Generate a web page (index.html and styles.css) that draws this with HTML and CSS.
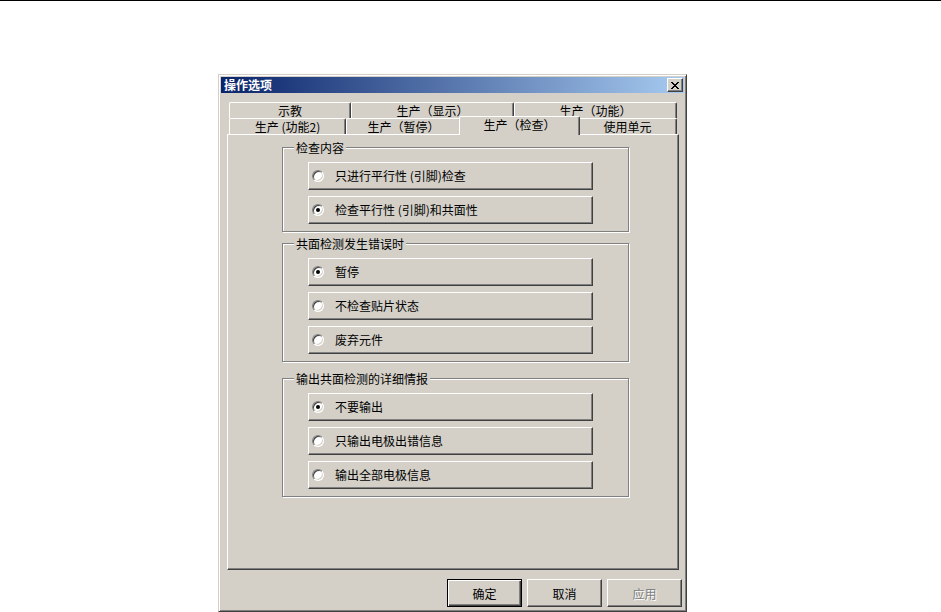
FILE: index.html
```html
<!DOCTYPE html>
<html lang="zh-CN">
<head>
<meta charset="utf-8">
<title>操作选项</title>
<link rel="stylesheet" href="styles.css">
</head>
<body>
<div class="topline"></div>
<div class="stage">
  <div class="dialog">
    <div class="titlebar">
      <span class="title">操作选项</span>
      <span class="close">
        <svg width="8" height="7" viewBox="0 0 8 7" shape-rendering="crispEdges"><path fill="#000" d="M0 0h2v1h-2z M6 0h2v1h-2z M1 1h2v1h-2z M5 1h2v1h-2z M2 2h4v1h-4z M3 3h2v1h-2z M2 4h4v1h-4z M1 5h2v1h-2z M5 5h2v1h-2z M0 6h2v1h-2z M6 6h2v1h-2z"/></svg>
      </span>
    </div>
    <div class="tabs">
      <div class="tabrow">
        <div class="tab t1">示教</div>
        <div class="tab t2">生产（显示）</div>
        <div class="tab t3">生产（功能）</div>
      </div>
      <div class="tabrow">
        <div class="tab t4">生产 (功能2)</div>
        <div class="tab t5">生产（暂停）</div>
        <div class="tab t6 sel">生产（检查）</div>
        <div class="tab t7">使用单元</div>
      </div>
    </div>
    <div class="panel">
      <div class="group">
        <div class="legend">检查内容</div>
        <div class="opts">
          <div class="opt"><span class="radio"></span><span class="lbl">只进行平行性 (引脚)检查</span></div>
          <div class="opt"><span class="radio"><span class="dot"></span></span><span class="lbl">检查平行性 (引脚)和共面性</span></div>
        </div>
      </div>
      <div class="group g2">
        <div class="legend">共面检测发生错误时</div>
        <div class="opts">
          <div class="opt"><span class="radio"><span class="dot"></span></span><span class="lbl">暂停</span></div>
          <div class="opt"><span class="radio"></span><span class="lbl">不检查贴片状态</span></div>
          <div class="opt"><span class="radio"></span><span class="lbl">废弃元件</span></div>
        </div>
      </div>
      <div class="group g3">
        <div class="legend">输出共面检测的详细情报</div>
        <div class="opts">
          <div class="opt"><span class="radio"><span class="dot"></span></span><span class="lbl">不要输出</span></div>
          <div class="opt"><span class="radio"></span><span class="lbl">只输出电极出错信息</span></div>
          <div class="opt"><span class="radio"></span><span class="lbl">输出全部电极信息</span></div>
        </div>
      </div>
    </div>
    <div class="buttons">
      <div class="btn default">确定</div>
      <div class="btn">取消</div>
      <div class="btn disabled">应用</div>
    </div>
  </div>
</div>
</body>
</html>
```
FILE: styles.css
```css
body {
  margin: 0;
  background: #fff;
  font-family: "Noto Sans CJK SC", "Noto Sans", sans-serif;
  font-size: 12px;
  color: #000;
}

.topline {
  height: 1px;
  background: #000;
}

.stage {
  padding: 73px 0 0 218px;
}

.dialog {
  width: 469px;
  height: 538px;
  box-sizing: border-box;
  background: #d4d0c8;
  border: 1px solid;
  border-color: #d4d0c8 #404040 #404040 #d4d0c8;
  box-shadow: inset 1px 1px 0 #fff, inset -1px -1px 0 #808080;
  padding: 2px;
  display: flex;
  flex-direction: column;
}

.titlebar {
  height: 16px;
  flex: none;
  background: linear-gradient(to right, #0a246a, #a6caf0);
  display: flex;
  align-items: center;
  justify-content: space-between;
  padding-left: 3px;
}

.title {
  color: #fff;
  font-weight: bold;
  font-size: 12px;
  line-height: 16px;
}

.close {
  width: 16px;
  height: 14px;
  box-sizing: border-box;
  background: #d4d0c8;
  border: 1px solid;
  border-color: #fff #404040 #404040 #fff;
  box-shadow: inset -1px -1px 0 #808080;
  margin-right: 1px;
  display: flex;
  align-items: center;
  justify-content: center;
}

.close svg {
  display: block;
}

.tabs {
  margin: 9px 0 0 6px;
  width: 452px;
  display: flex;
  flex-direction: column;
}

.tabrow {
  display: flex;
  height: 16px;
  padding-left: 2px;
  align-items: flex-end;
}

.tab {
  height: 16px;
  box-sizing: border-box;
  background: #d4d0c8;
  border-top: 1px solid #fff;
  border-left: 1px solid #fff;
  border-right: 1px solid #404040;
  box-shadow: inset -1px 0 0 #808080;
  border-radius: 2px 2px 0 0;
  text-align: center;
  line-height: 15px;
  white-space: nowrap;
  flex: none;
}

.t1 { width: 122px; }
.t2 { width: 163px; }
.t3 { width: 163px; }
.t4 { width: 117px; }
.t5 { width: 115px; }
.t6 { width: 117px; }
.t7 { width: 99px; }

.tab.sel {
  width: 121px;
  height: 19px;
  margin: 0 -2px -1px;
  position: relative;
  z-index: 2;
  line-height: 16px;
}

.panel {
  margin-left: 6px;
  width: 452px;
  height: 436px;
  flex: none;
  box-sizing: border-box;
  border: 1px solid;
  border-color: #fff #404040 #404040 #fff;
  box-shadow: inset -1px -1px 0 #808080;
  padding: 12px 0 0 54px;
}

.group {
  width: 347px;
  box-sizing: border-box;
  border: 1px solid #808080;
  box-shadow: 1px 1px 0 #fff, inset 1px 1px 0 #fff;
  padding: 0 0 7px 0;
}

.g2 { margin-top: 11px; }
.g3 { margin-top: 16px; }

.legend {
  margin: -7px 0 0 11px;
  width: fit-content;
  padding: 0 2px;
  height: 14px;
  line-height: 14px;
  background: #d4d0c8;
}

.opts {
  margin-top: 7px;
  padding-left: 25px;
  display: flex;
  flex-direction: column;
  gap: 6px;
}

.opt {
  width: 285px;
  height: 28px;
  box-sizing: border-box;
  border: 1px solid;
  border-color: #fff #404040 #404040 #fff;
  box-shadow: inset -1px -1px 0 #808080;
  display: flex;
  align-items: center;
  padding-left: 3px;
  gap: 11px;
}

.radio {
  width: 12px;
  height: 12px;
  flex: none;
  box-sizing: border-box;
  border-radius: 50%;
  border: 1px solid;
  border-color: #808080 #fff #fff #808080;
  box-shadow: inset 1px 1px 0 #404040, inset -1px -1px 0 #d4d0c8;
  background: #fff;
  display: flex;
  align-items: center;
  justify-content: center;
}

.dot {
  width: 4px;
  height: 4px;
  border-radius: 50%;
  background: #000;
}

.lbl {
  line-height: 14px;
  white-space: nowrap;
}

.buttons {
  display: flex;
  justify-content: flex-end;
  gap: 5px;
  margin-top: 9px;
  padding-right: 2px;
}

.btn {
  width: 75px;
  height: 28px;
  box-sizing: border-box;
  border: 1px solid;
  border-color: #fff #404040 #404040 #fff;
  box-shadow: inset -1px -1px 0 #808080;
  display: flex;
  align-items: center;
  justify-content: center;
}

.btn.default {
  border-color: #000;
  box-shadow: inset 1px 1px 0 #fff, inset -1px -1px 0 #404040, inset -2px -2px 0 #808080;
}

.btn.disabled {
  color: #808080;
  text-shadow: 1px 1px 0 #fff;
}
```
